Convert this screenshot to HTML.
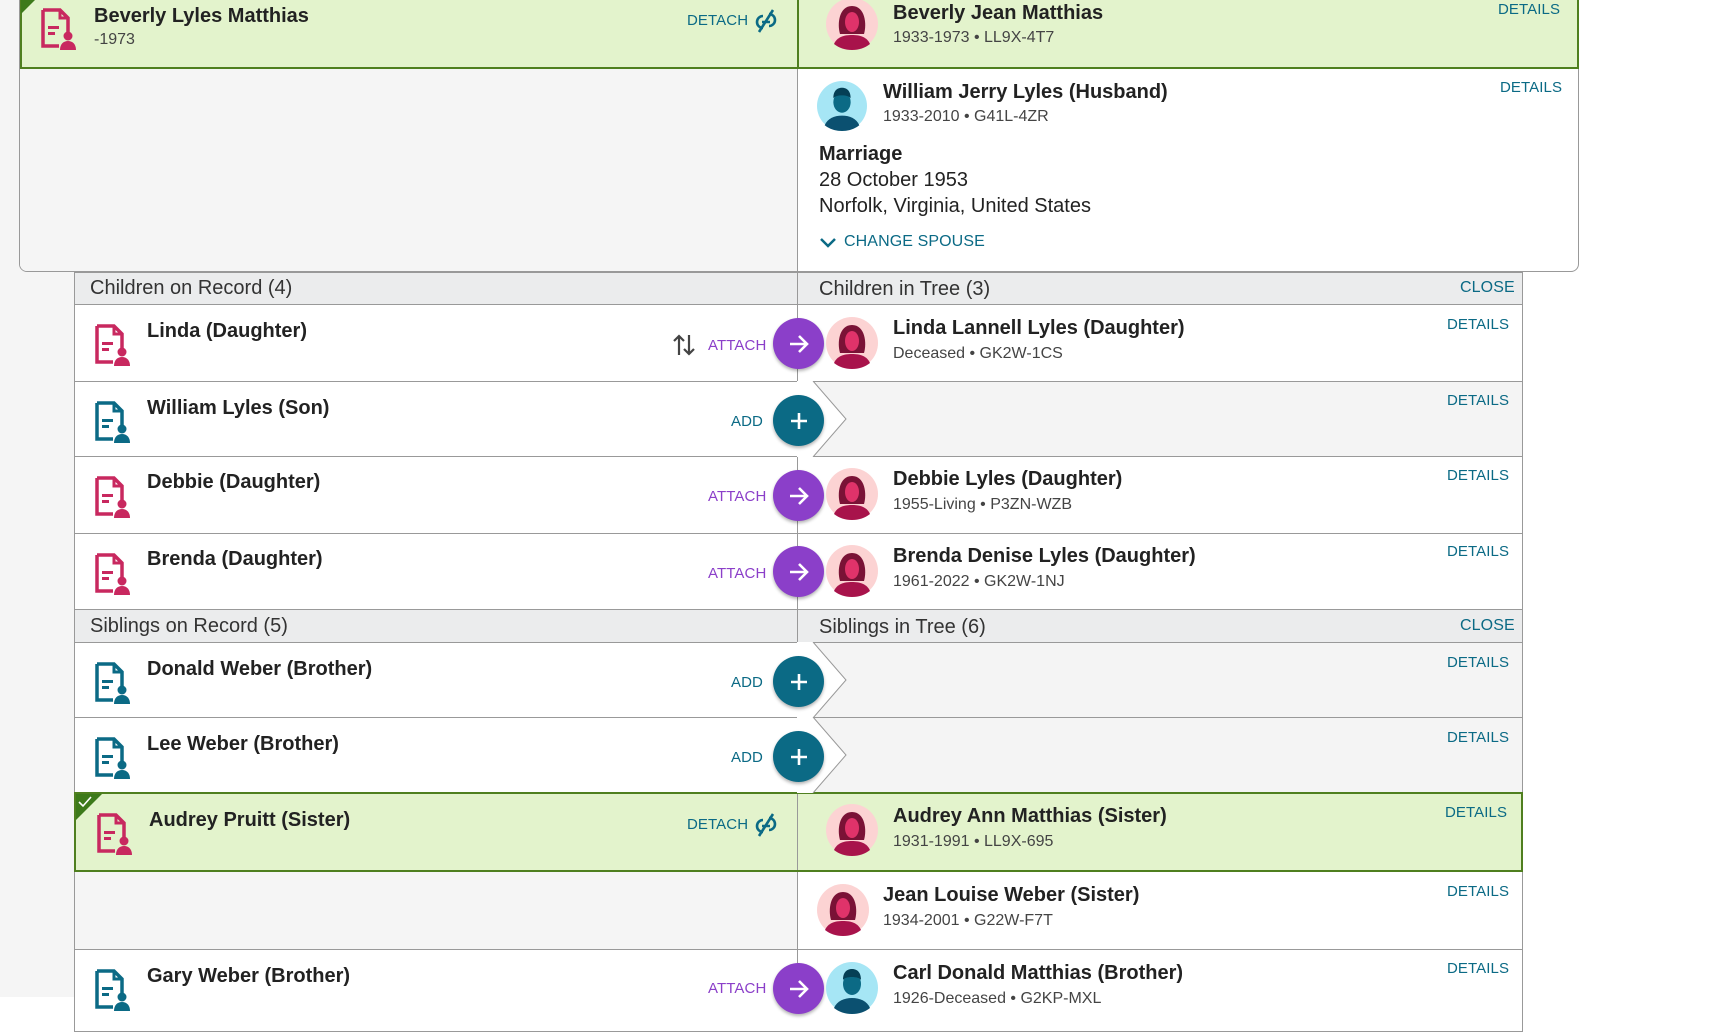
<!DOCTYPE html>
<html><head><meta charset="utf-8"><style>
*{box-sizing:border-box;margin:0;padding:0}
body{width:1735px;height:997px;overflow:hidden;background:#fff;font-family:"Liberation Sans",sans-serif;color:#1a1a1a;position:relative}
.abs{position:absolute}
.nm{position:absolute;font-size:20px;font-weight:bold;white-space:nowrap;color:#222}
.sb{position:absolute;font-size:16px;color:#444;white-space:nowrap}
.lnk{position:absolute;font-size:15px;color:#0b6a85;letter-spacing:.1px;white-space:nowrap}
.att{color:#8b3fc9}
.btn{position:absolute;width:51px;height:51px;border-radius:50%;box-shadow:0 2px 3px rgba(0,0,0,.3)}
.hdr{position:absolute;font-size:20px;color:#333;white-space:nowrap}
.hl{position:absolute;height:1px;background:#999}
.vl{position:absolute;width:1px;background:#999}
</style></head><body>
<svg width="0" height="0" style="position:absolute">
<defs>
<symbol id="doc" viewBox="0 0 36 42"><path d="M3 2h17l8 8v14" fill="none" stroke="currentColor" stroke-width="3.5"/><path d="M3 2v36h16" fill="none" stroke="currentColor" stroke-width="3.5"/><path d="M20 2v8h8" fill="none" stroke="currentColor" stroke-width="3"/><rect x="8" y="18" width="11" height="3" fill="currentColor"/><rect x="8" y="24" width="7" height="3" fill="currentColor"/><circle cx="28" cy="28" r="4.5" fill="currentColor"/><path d="M20 42c0-6 3.5-9 8-9s8 3 8 9z" fill="currentColor"/></symbol>
<symbol id="fem" viewBox="0 0 52 52"><circle cx="26" cy="26" r="26" fill="#fcd3d3"/><path d="M14 36c-3-10-1-28 12-28s15 18 12 28z" fill="#7a1236"/><ellipse cx="26" cy="24" rx="7" ry="10" fill="#e0336a"/><path d="M8 46c3-7 10-9 18-9s15 2 18 9c-5 4-11 6-18 6s-13-2-18-6z" fill="#a8134b"/></symbol>
<symbol id="mal" viewBox="0 0 52 52"><circle cx="26" cy="26" r="26" fill="#a6e6f5"/><ellipse cx="26" cy="22" rx="9" ry="11" fill="#0b6a85"/><path d="M17 18c0-8 4-11 9-11s9 3 9 11c-2-4-16-4-18 0z" fill="#053f55"/><path d="M8 46c3-7 10-10 18-10s15 3 18 10c-5 4-11 6-18 6s-13-2-18-6z" fill="#0b5070"/></symbol>
<symbol id="brk" viewBox="0 0 26 26"><path d="M10 8a6 6 0 0 0-6 6v0a6 6 0 0 0 6 6M16 18a6 6 0 0 0 6-6a6 6 0 0 0-6-6M9 14h8" fill="none" stroke="#0b6a85" stroke-width="2.6"/><path d="M20 2L6 24" stroke="#0b6a85" stroke-width="2.6"/></symbol>
</defs></svg>

<div class="abs" style="left:0;top:0;width:74px;height:997px;background:#f5f5f5"></div>

<div class="abs" style="left:19px;top:-2px;width:1560px;height:274px;border:1px solid #999;border-radius:0 0 8px 8px;background:#fff;overflow:hidden">
  <div class="abs" style="left:0;top:70px;width:778px;height:210px;background:#f5f5f5"></div>
</div>
<div class="abs" style="left:20px;top:0;width:778px;height:69px;background:#e3f3cc;border:2px solid #4f7f1f;border-top:none;border-right:none"></div>
<div class="abs" style="left:797px;top:0;width:782px;height:69px;background:#e3f3cc;border:2px solid #4f7f1f;border-top:none"></div>
<div class="abs" style="left:21px;top:0;width:0;height:0;border-top:14px solid #3d7a1a;border-right:14px solid transparent"></div>
<svg class="abs" style="left:40px;top:8px;color:#c8285f" width="36" height="42"><use href="#doc"/></svg>
<div class="nm" style="left:94px;top:5px">Beverly Lyles Matthias</div>
<div class="sb" style="left:94px;top:31px">-1973</div>
<div class="lnk" style="left:687px;top:12px">DETACH</div>
<svg class="abs" style="left:753px;top:8px" width="26" height="26"><use href="#brk"/></svg>
<svg class="abs" style="left:826px;top:-2px" width="52" height="52"><use href="#fem"/></svg>
<div class="nm" style="left:893px;top:2px">Beverly Jean Matthias</div>
<div class="sb" style="left:893px;top:29px">1933-1973 • LL9X-4T7</div>
<div class="lnk" style="left:1498px;top:1px">DETAILS</div>
<div class="vl" style="left:797px;top:69px;height:203px"></div>
<svg class="abs" style="left:817px;top:81px" width="50" height="50"><use href="#mal"/></svg>
<div class="nm" style="left:883px;top:81px">William Jerry Lyles (Husband)</div>
<div class="sb" style="left:883px;top:108px">1933-2010 • G41L-4ZR</div>
<div class="lnk" style="left:1500px;top:79px">DETAILS</div>
<div class="nm" style="left:819px;top:143px;font-size:20px">Marriage</div>
<div class="abs" style="left:819px;top:169px;font-size:20px;color:#222">28 October 1953</div>
<div class="abs" style="left:819px;top:195px;font-size:20px;color:#222">Norfolk, Virginia, United States</div>
<svg class="abs" style="left:819px;top:236px" width="18" height="14"><path d="M2 3l7 7 7-7" fill="none" stroke="#0b6a85" stroke-width="2.5"/></svg>
<div class="lnk" style="left:844px;top:233px;font-size:16px">CHANGE SPOUSE</div>

<div class="abs" style="left:74px;top:272px;width:1449px;height:760px;border:1px solid #999;border-top:none;background:#fff"></div>

<div class="abs" style="left:75px;top:272px;width:1447px;height:32px;background:#ebeced"></div>
<div class="abs" style="left:75px;top:609px;width:1447px;height:33px;background:#ebeced"></div>
<div class="hdr" style="left:90px;top:277px">Children on Record (4)</div>
<div class="hdr" style="left:819px;top:278px">Children in Tree (3)</div>
<div class="lnk" style="left:1460px;top:279px;font-size:16px">CLOSE</div>
<div class="hdr" style="left:90px;top:615px">Siblings on Record (5)</div>
<div class="hdr" style="left:819px;top:616px">Siblings in Tree (6)</div>
<div class="lnk" style="left:1460px;top:617px;font-size:16px">CLOSE</div>

<div class="abs" style="left:798px;top:381px;width:724px;height:75px;background:#f4f4f4"></div>
<div class="abs" style="left:798px;top:642px;width:724px;height:150px;background:#f4f4f4"></div>
<div class="abs" style="left:75px;top:872px;width:722px;height:77px;background:#f5f5f5"></div>
<div class="abs" style="left:74px;top:792px;width:1449px;height:80px;background:#e3f3cc;border:2px solid #4f7f1f"></div>
<div class="vl" style="left:797px;top:794px;height:76px"></div>
<div class="abs" style="left:76px;top:794px;width:0;height:0;border-top:26px solid #3d7a1a;border-right:26px solid transparent"></div>
<svg class="abs" style="left:78px;top:796px" width="14" height="12"><path d="M1 6l4 4 8-9" fill="none" stroke="#fff" stroke-width="1.6"/></svg>

<div class="hl" style="left:74px;top:272px;width:1449px"></div>
<div class="hl" style="left:74px;top:304px;width:1449px"></div>
<div class="hl" style="left:74px;top:381px;width:1449px"></div>
<div class="hl" style="left:74px;top:456px;width:1449px"></div>
<div class="hl" style="left:74px;top:533px;width:1449px"></div>
<div class="hl" style="left:74px;top:609px;width:1449px"></div>
<div class="hl" style="left:74px;top:642px;width:1449px"></div>
<div class="hl" style="left:74px;top:717px;width:1449px"></div>
<div class="hl" style="left:74px;top:949px;width:1449px"></div>
<div class="vl" style="left:797px;top:272px;height:520px"></div>
<div class="vl" style="left:797px;top:872px;height:125px"></div>

<svg class="abs" style="left:797px;top:381px" width="52" height="76"><path d="M0 0h16l33 38-33 38H0z" fill="#fff"/><path d="M16 0l33 38-33 38" fill="none" stroke="#999"/></svg>
<svg class="abs" style="left:797px;top:642px" width="52" height="76"><path d="M0 0h16l33 38-33 38H0z" fill="#fff"/><path d="M16 0l33 38-33 38" fill="none" stroke="#999"/></svg>
<svg class="abs" style="left:797px;top:717px" width="52" height="76"><path d="M0 0h16l33 38-33 38H0z" fill="#fff"/><path d="M16 0l33 38-33 38" fill="none" stroke="#999"/></svg>

<svg class="abs" style="left:94px;top:324px;color:#c8285f" width="36" height="42"><use href="#doc"/></svg>
<div class="nm" style="left:147px;top:320px">Linda (Daughter)</div>
<svg class="abs" style="left:672px;top:333px" width="24" height="24"><path d="M7 22V3M2 8l5-5 5 5M17 2v19M12 16l5 5 5-5" fill="none" stroke="#444" stroke-width="2.2"/></svg>
<div class="lnk att" style="left:708px;top:337px">ATTACH</div>
<div class="btn" style="left:773px;top:318px;background:#8b3fc9"></div>
<svg class="abs" style="left:786px;top:331px" width="26" height="26"><path d="M4 13h17M13 5l8 8-8 8" fill="none" stroke="#fff" stroke-width="2.6"/></svg>
<svg class="abs" style="left:826px;top:317px" width="52" height="52"><use href="#fem"/></svg>
<div class="nm" style="left:893px;top:317px">Linda Lannell Lyles (Daughter)</div>
<div class="sb" style="left:893px;top:345px">Deceased • GK2W-1CS</div>
<div class="lnk" style="left:1447px;top:316px">DETAILS</div>

<svg class="abs" style="left:94px;top:401px;color:#0b6a85" width="36" height="42"><use href="#doc"/></svg>
<div class="nm" style="left:147px;top:397px">William Lyles (Son)</div>
<div class="lnk" style="left:731px;top:413px">ADD</div>
<div class="btn" style="left:773px;top:395px;background:#0b6a85"></div>
<svg class="abs" style="left:786px;top:408px" width="26" height="26"><path d="M13 5v16M5 13h16" stroke="#fff" stroke-width="2.6"/></svg>
<div class="lnk" style="left:1447px;top:392px">DETAILS</div>

<svg class="abs" style="left:94px;top:476px;color:#c8285f" width="36" height="42"><use href="#doc"/></svg>
<div class="nm" style="left:147px;top:471px">Debbie (Daughter)</div>
<div class="lnk att" style="left:708px;top:488px">ATTACH</div>
<div class="btn" style="left:773px;top:470px;background:#8b3fc9"></div>
<svg class="abs" style="left:786px;top:483px" width="26" height="26"><path d="M4 13h17M13 5l8 8-8 8" fill="none" stroke="#fff" stroke-width="2.6"/></svg>
<svg class="abs" style="left:826px;top:468px" width="52" height="52"><use href="#fem"/></svg>
<div class="nm" style="left:893px;top:468px">Debbie Lyles (Daughter)</div>
<div class="sb" style="left:893px;top:496px">1955-Living • P3ZN-WZB</div>
<div class="lnk" style="left:1447px;top:467px">DETAILS</div>

<svg class="abs" style="left:94px;top:553px;color:#c8285f" width="36" height="42"><use href="#doc"/></svg>
<div class="nm" style="left:147px;top:548px">Brenda (Daughter)</div>
<div class="lnk att" style="left:708px;top:565px">ATTACH</div>
<div class="btn" style="left:773px;top:546px;background:#8b3fc9"></div>
<svg class="abs" style="left:786px;top:559px" width="26" height="26"><path d="M4 13h17M13 5l8 8-8 8" fill="none" stroke="#fff" stroke-width="2.6"/></svg>
<svg class="abs" style="left:826px;top:545px" width="52" height="52"><use href="#fem"/></svg>
<div class="nm" style="left:893px;top:545px">Brenda Denise Lyles (Daughter)</div>
<div class="sb" style="left:893px;top:573px">1961-2022 • GK2W-1NJ</div>
<div class="lnk" style="left:1447px;top:543px">DETAILS</div>

<svg class="abs" style="left:94px;top:662px;color:#0b6a85" width="36" height="42"><use href="#doc"/></svg>
<div class="nm" style="left:147px;top:658px">Donald Weber (Brother)</div>
<div class="lnk" style="left:731px;top:674px">ADD</div>
<div class="btn" style="left:773px;top:656px;background:#0b6a85"></div>
<svg class="abs" style="left:786px;top:669px" width="26" height="26"><path d="M13 5v16M5 13h16" stroke="#fff" stroke-width="2.6"/></svg>
<div class="lnk" style="left:1447px;top:654px">DETAILS</div>

<svg class="abs" style="left:94px;top:737px;color:#0b6a85" width="36" height="42"><use href="#doc"/></svg>
<div class="nm" style="left:147px;top:733px">Lee Weber (Brother)</div>
<div class="lnk" style="left:731px;top:749px">ADD</div>
<div class="btn" style="left:773px;top:731px;background:#0b6a85"></div>
<svg class="abs" style="left:786px;top:744px" width="26" height="26"><path d="M13 5v16M5 13h16" stroke="#fff" stroke-width="2.6"/></svg>
<div class="lnk" style="left:1447px;top:729px">DETAILS</div>

<svg class="abs" style="left:96px;top:813px;color:#c8285f" width="36" height="42"><use href="#doc"/></svg>
<div class="nm" style="left:149px;top:809px">Audrey Pruitt (Sister)</div>
<div class="lnk" style="left:687px;top:816px">DETACH</div>
<svg class="abs" style="left:753px;top:812px" width="26" height="26"><use href="#brk"/></svg>
<svg class="abs" style="left:826px;top:804px" width="52" height="52"><use href="#fem"/></svg>
<div class="nm" style="left:893px;top:805px">Audrey Ann Matthias (Sister)</div>
<div class="sb" style="left:893px;top:833px">1931-1991 • LL9X-695</div>
<div class="lnk" style="left:1445px;top:804px">DETAILS</div>

<svg class="abs" style="left:817px;top:884px" width="52" height="52"><use href="#fem"/></svg>
<div class="nm" style="left:883px;top:884px">Jean Louise Weber (Sister)</div>
<div class="sb" style="left:883px;top:912px">1934-2001 • G22W-F7T</div>
<div class="lnk" style="left:1447px;top:883px">DETAILS</div>

<svg class="abs" style="left:94px;top:969px;color:#0b6a85" width="36" height="42"><use href="#doc"/></svg>
<div class="nm" style="left:147px;top:965px">Gary Weber (Brother)</div>
<div class="lnk att" style="left:708px;top:980px">ATTACH</div>
<div class="btn" style="left:773px;top:963px;background:#8b3fc9"></div>
<svg class="abs" style="left:786px;top:976px" width="26" height="26"><path d="M4 13h17M13 5l8 8-8 8" fill="none" stroke="#fff" stroke-width="2.6"/></svg>
<svg class="abs" style="left:826px;top:962px" width="52" height="52"><use href="#mal"/></svg>
<div class="nm" style="left:893px;top:962px">Carl Donald Matthias (Brother)</div>
<div class="sb" style="left:893px;top:990px">1926-Deceased • G2KP-MXL</div>
<div class="lnk" style="left:1447px;top:960px">DETAILS</div>
</body></html>
